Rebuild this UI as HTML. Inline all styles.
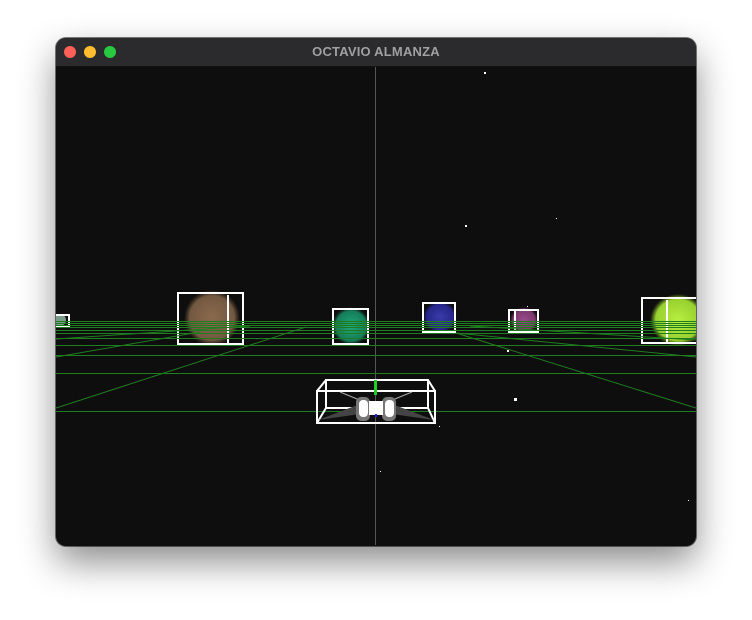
<!DOCTYPE html>
<html><head><style>
html,body{margin:0;padding:0;background:#fff;width:752px;height:620px;overflow:hidden}
.win{position:absolute;left:56px;top:38px;width:640px;height:508px;border-radius:10px;overflow:hidden;background:#0e0e0e;box-shadow:0 16px 36px rgba(0,0,0,.45),0 0 0 1px rgba(0,0,0,.5)}
.tb{position:absolute;left:0;top:0;width:640px;height:28px;background:#2b2b2d;border-bottom:1px solid #111}
.tb .t{position:absolute;left:0;right:0;top:6px;text-align:center;font:bold 13px "Liberation Sans",sans-serif;color:#a0a0a2;letter-spacing:.2px}
.d{position:absolute;top:8px;width:12px;height:12px;border-radius:50%}
svg{position:absolute;left:0;top:0}
</style></head><body>
<div class="win">
<div class="tb"><span class="d" style="left:8px;background:#fe5f57"></span><span class="d" style="left:28px;background:#febc2e"></span><span class="d" style="left:48px;background:#28c840"></span><div class="t">OCTAVIO ALMANZA</div></div>
</div>
<svg width="752" height="620" viewBox="0 0 752 620">
<defs>
<clipPath id="c"><rect x="56" y="67" width="640" height="478"/></clipPath>
<radialGradient id="br"><stop offset="0" stop-color="#8a6a4e"/><stop offset=".8" stop-color="#735840"/><stop offset="1" stop-color="#5a4532" stop-opacity="0"/></radialGradient>
<radialGradient id="gr"><stop offset="0" stop-color="#1fa878"/><stop offset=".8" stop-color="#167c5a"/><stop offset="1" stop-color="#0e5a40" stop-opacity="0"/></radialGradient>
<radialGradient id="bl"><stop offset="0" stop-color="#3a3aa8"/><stop offset=".8" stop-color="#25258a"/><stop offset="1" stop-color="#1a1a60" stop-opacity="0"/></radialGradient>
<radialGradient id="pu"><stop offset="0" stop-color="#9a4a8c"/><stop offset=".8" stop-color="#7a3a6c"/><stop offset="1" stop-color="#5a2a50" stop-opacity="0"/></radialGradient>
<radialGradient id="li"><stop offset="0" stop-color="#b8f040"/><stop offset=".8" stop-color="#98d030"/><stop offset="1" stop-color="#70a020" stop-opacity="0"/></radialGradient>
</defs>
<g clip-path="url(#c)">
<line x1="375.5" y1="67" x2="375.5" y2="545" stroke="#555" stroke-width="1"/>
<g fill="#fff">
<rect x="484" y="72" width="2" height="2"/><rect x="465" y="225" width="2" height="2"/><rect x="556" y="218" width="1" height="1"/><rect x="514" y="398" width="3" height="3"/><rect x="380" y="471" width="1" height="1"/><rect x="439" y="426" width="1" height="1"/><rect x="688" y="500" width="1" height="1"/><rect x="427" y="345" width="1" height="1"/><rect x="507" y="350" width="2" height="2"/><rect x="527" y="306" width="1" height="1"/>
</g>
<ellipse cx="212" cy="318" rx="28" ry="28" fill="url(#br)"/>
<ellipse cx="351" cy="326" rx="19" ry="19" fill="url(#gr)"/>
<ellipse cx="440" cy="317" rx="17" ry="16" fill="url(#bl)"/>
<ellipse cx="524" cy="320" rx="14" ry="13" fill="url(#pu)"/>
<ellipse cx="678" cy="320" rx="28" ry="26" fill="url(#li)"/>
<ellipse cx="60" cy="320" rx="6" ry="6" fill="#7a9a8a"/>
<g fill="none" stroke="#fff" stroke-width="2">
<rect x="178" y="293" width="65" height="51"/><line x1="228" y1="295" x2="228" y2="343"/>
<rect x="333" y="309" width="35" height="35"/>
<rect x="423" y="303" width="32" height="29"/>
<rect x="509" y="310" width="29" height="22"/><line x1="515" y1="311" x2="515" y2="331"/>
<rect x="642" y="298" width="60" height="45"/><line x1="667" y1="300" x2="667" y2="342"/>
<rect x="50" y="315" width="19" height="12"/>
</g>
<g stroke="#1f7d1f" stroke-width="1">
<line x1="56" y1="321.5" x2="696" y2="321.5"/><line x1="56" y1="323.5" x2="696" y2="323.5"/><line x1="56" y1="325.5" x2="696" y2="325.5"/><line x1="56" y1="327.5" x2="696" y2="327.5"/><line x1="56" y1="330.5" x2="696" y2="330.5"/><line x1="56" y1="333.5" x2="696" y2="333.5"/><line x1="56" y1="338.5" x2="696" y2="338.5"/><line x1="56" y1="345.5" x2="696" y2="345.5"/><line x1="56" y1="355.5" x2="696" y2="355.5"/><line x1="56" y1="373.5" x2="696" y2="373.5"/><line x1="56" y1="411.5" x2="696" y2="411.5"/>
<line x1="56" y1="408" x2="306" y2="327"/><line x1="456" y1="333" x2="696" y2="408"/>
<line x1="56" y1="357" x2="200" y2="332"/><line x1="456" y1="333" x2="696" y2="357"/>
<line x1="56" y1="339" x2="250" y2="326"/><line x1="470" y1="326" x2="696" y2="340"/>
</g>
<g fill="none" stroke="#fff" stroke-width="2">
<rect x="317" y="391" width="118" height="32"/>
<rect x="326" y="380" width="102" height="28"/>
<line x1="317" y1="391" x2="326" y2="380"/><line x1="435" y1="391" x2="428" y2="380"/>
<line x1="317" y1="423" x2="326" y2="408"/><line x1="435" y1="423" x2="428" y2="408"/>
</g>
<polygon points="318,420 360,404 360,414" fill="#444"/>
<polygon points="434,420 392,404 392,414" fill="#444"/>
<line x1="340" y1="392" x2="362" y2="401" stroke="#aaa"/><line x1="412" y1="392" x2="390" y2="401" stroke="#aaa"/>
<rect x="356" y="397" width="14" height="24" rx="5" fill="#777"/>
<rect x="382" y="397" width="14" height="24" rx="5" fill="#777"/>
<rect x="359" y="400" width="9" height="17" rx="4" fill="#fff"/>
<rect x="385" y="400" width="9" height="17" rx="4" fill="#fff"/>
<rect x="369" y="401" width="14" height="14" fill="#fff"/>
<rect x="374" y="380" width="3" height="15" fill="#22d022"/>
<rect x="375" y="414" width="2" height="3" fill="#2222dd"/>
</g>
</svg>
</body></html>
